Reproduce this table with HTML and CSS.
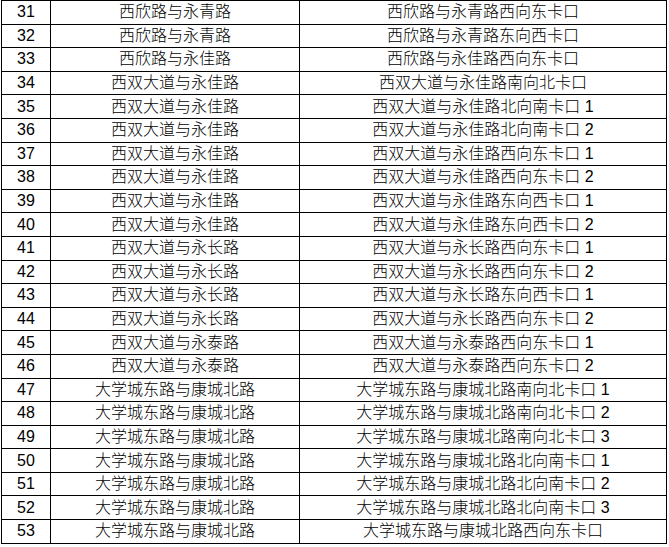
FILE: index.html
```html
<!DOCTYPE html>
<html lang="zh">
<head>
<meta charset="utf-8">
<link rel="stylesheet" href="styles.css">
</head>
<body>
<table class="grid">
<colgroup><col class="c-no"><col class="c-road"><col class="c-point"></colgroup>
<tbody>
<tr><td>31</td><td>西欣路与永青路</td><td>西欣路与永青路西向东卡口</td></tr>
<tr><td>32</td><td>西欣路与永青路</td><td>西欣路与永青路东向西卡口</td></tr>
<tr><td>33</td><td>西欣路与永佳路</td><td>西欣路与永佳路西向东卡口</td></tr>
<tr><td>34</td><td>西双大道与永佳路</td><td>西双大道与永佳路南向北卡口</td></tr>
<tr><td>35</td><td>西双大道与永佳路</td><td>西双大道与永佳路北向南卡口 1</td></tr>
<tr><td>36</td><td>西双大道与永佳路</td><td>西双大道与永佳路北向南卡口 2</td></tr>
<tr><td>37</td><td>西双大道与永佳路</td><td>西双大道与永佳路西向东卡口 1</td></tr>
<tr><td>38</td><td>西双大道与永佳路</td><td>西双大道与永佳路西向东卡口 2</td></tr>
<tr><td>39</td><td>西双大道与永佳路</td><td>西双大道与永佳路东向西卡口 1</td></tr>
<tr><td>40</td><td>西双大道与永佳路</td><td>西双大道与永佳路东向西卡口 2</td></tr>
<tr><td>41</td><td>西双大道与永长路</td><td>西双大道与永长路西向东卡口 1</td></tr>
<tr><td>42</td><td>西双大道与永长路</td><td>西双大道与永长路西向东卡口 2</td></tr>
<tr><td>43</td><td>西双大道与永长路</td><td>西双大道与永长路东向西卡口 1</td></tr>
<tr><td>44</td><td>西双大道与永长路</td><td>西双大道与永长路西向东卡口 2</td></tr>
<tr><td>45</td><td>西双大道与永泰路</td><td>西双大道与永泰路西向东卡口 1</td></tr>
<tr><td>46</td><td>西双大道与永泰路</td><td>西双大道与永泰路西向东卡口 2</td></tr>
<tr><td>47</td><td>大学城东路与康城北路</td><td>大学城东路与康城北路南向北卡口 1</td></tr>
<tr><td>48</td><td>大学城东路与康城北路</td><td>大学城东路与康城北路南向北卡口 2</td></tr>
<tr><td>49</td><td>大学城东路与康城北路</td><td>大学城东路与康城北路南向北卡口 3</td></tr>
<tr><td>50</td><td>大学城东路与康城北路</td><td>大学城东路与康城北路北向南卡口 1</td></tr>
<tr><td>51</td><td>大学城东路与康城北路</td><td>大学城东路与康城北路北向南卡口 2</td></tr>
<tr><td>52</td><td>大学城东路与康城北路</td><td>大学城东路与康城北路北向南卡口 3</td></tr>
<tr><td>53</td><td>大学城东路与康城北路</td><td>大学城东路与康城北路西向东卡口</td></tr>
</tbody>
</table>
</body>
</html>
```

FILE: styles.css
```css
html, body {
  margin: 0;
  padding: 0;
  background: #ffffff;
}

body {
  font-family: "Liberation Sans", "Noto Sans CJK SC", sans-serif;
  font-size: 16px;
  font-weight: 300;
  color: #000000;
}

.grid {
  margin-left: 1px;
  border-collapse: collapse;
  table-layout: fixed;
  width: 665px;
}

.c-no { width: 49px; }
.c-road { width: 249px; }
.c-point { width: 367px; }

.grid td {
  border: 1px solid #000000;
  height: 22.6px;
  padding: 0;
  text-align: center;
  vertical-align: middle;
  line-height: 18px;
  white-space: nowrap;
  overflow: hidden;
}
```
